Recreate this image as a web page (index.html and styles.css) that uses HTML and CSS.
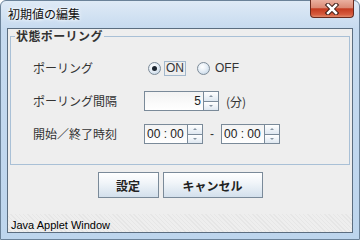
FILE: index.html
```html
<!DOCTYPE html>
<html>
<head>
    <title>初期値の編集</title>
    <link rel="stylesheet" href="styles.css">
</head>
<body>
    <div class="window">
        <div class="titlebar">
            <span class="title">初期値の編集</span>
            <button class="close" type="button">
                <svg width="16" height="12" viewBox="0 0 16 12">
                    <path d="M4 2 L12 10 M12 2 L4 10" stroke="#3a1a14" stroke-width="4.5" stroke-linecap="square"/>
                    <path d="M4 2 L12 10 M12 2 L4 10" stroke="#ffffff" stroke-width="2.5" stroke-linecap="square"/>
                </svg>
            </button>
        </div>

        <div class="client">
            <fieldset class="group">
                <legend>状態ポーリング</legend>
                <div class="form-grid">
                    <div class="label">ポーリング</div>
                    <div class="radios">
                        <label class="option">
                            <span class="radio checked"></span>
                            <span class="option-text focused">ON</span>
                        </label>
                        <label class="option">
                            <span class="radio"></span>
                            <span class="option-text">OFF</span>
                        </label>
                    </div>

                    <div class="label">ポーリング間隔</div>
                    <div class="control-row">
                        <div class="spin spin-wide">
                            <div class="spin-field align-right">5</div>
                            <div class="spin-btns">
                                <span class="spin-btn up"><i></i></span>
                                <span class="spin-btn down"><i></i></span>
                            </div>
                        </div>
                        <span class="unit">(分)</span>
                    </div>

                    <div class="label">開始／終了時刻</div>
                    <div class="control-row">
                        <div class="spin spin-time">
                            <div class="spin-field">00 : 00</div>
                            <div class="spin-btns">
                                <span class="spin-btn up"><i></i></span>
                                <span class="spin-btn down"><i></i></span>
                            </div>
                        </div>
                        <span class="dash">-</span>
                        <div class="spin spin-time">
                            <div class="spin-field">00 : 00</div>
                            <div class="spin-btns">
                                <span class="spin-btn up"><i></i></span>
                                <span class="spin-btn down"><i></i></span>
                            </div>
                        </div>
                    </div>
                </div>
            </fieldset>

            <div class="buttons">
                <button type="button" class="btn btn-ok">設定</button>
                <button type="button" class="btn btn-cancel">キャンセル</button>
            </div>

            <div class="status">Java Applet Window</div>
        </div>
    </div>
</body>
</html>
```

FILE: styles.css
```css
        body {
            margin: 0;
            font-family: "Liberation Sans", "Noto Sans CJK JP", sans-serif;
            font-size: 12px;
            color: #222;
        }

        .window {
            width: 360px;
            height: 240px;
            box-sizing: border-box;
            display: flex;
            flex-direction: column;
            padding: 0 6px 6px 6px;
            border: 1px solid #6b8299;
            border-radius: 6px 6px 0 0;
            background: linear-gradient(180deg, #dfeaf6 0, #c6daef 28px, #bdd5ed 100%);
        }

        .titlebar {
            height: 27px;
            display: flex;
            justify-content: space-between;
            align-items: flex-start;
            flex-shrink: 0;
        }

        .title {
            padding: 5px 0 0 1px;
            line-height: 16px;
            font-family: "Noto Sans CJK JP", sans-serif;
            color: #111;
            text-shadow: 0 0 5px #ffffff, 0 0 3px #ffffff;
        }

        .close {
            width: 44px;
            height: 18px;
            margin: -1px -1px 0 0;
            padding: 0;
            display: flex;
            align-items: center;
            justify-content: center;
            border: 1px solid #6a2a1e;
            border-top: none;
            border-radius: 0 0 4px 4px;
            background: linear-gradient(180deg, #eab0a0 0%, #db8a75 45%, #c43b20 52%, #d65b3e 85%, #e08a6c 100%);
        }

        .client {
            flex: 1;
            display: flex;
            flex-direction: column;
            border: 1px solid #5b6d80;
            background-color: #eeeeee;
        }

        .group {
            margin: 0 2px;
            padding: 15px 0 20px 22px;
            border: 1px solid #a9c0d6;
        }

        .group legend {
            margin-left: -18px;
            padding: 0 1px;
            line-height: 14px;
            font-family: "Noto Sans CJK JP", sans-serif;
            font-weight: bold;
            letter-spacing: 0.4px;
            color: #333;
        }

        .form-grid {
            display: grid;
            grid-template-columns: 111px auto;
            grid-auto-rows: 20px;
            row-gap: 13px;
            align-items: center;
        }

        .label {
            font-family: "Noto Sans CJK JP", sans-serif;
            line-height: 16px;
            color: #333;
        }

        .radios {
            display: flex;
            align-items: center;
            gap: 11px;
            padding-left: 4px;
        }

        .option {
            display: flex;
            align-items: center;
            gap: 3px;
        }

        .radio {
            width: 11px;
            height: 11px;
            border: 1px solid #7d8b98;
            border-radius: 50%;
            background: radial-gradient(circle at 40% 35%, #ffffff 0, #e6eef6 45%, #b9cde0 100%);
            display: flex;
            align-items: center;
            justify-content: center;
        }

        .radio.checked::after {
            content: "";
            width: 5px;
            height: 5px;
            border-radius: 50%;
            background-color: #1c2530;
        }

        .option-text {
            padding: 0 1px;
            border: 1px solid transparent;
            line-height: 13px;
            color: #333;
        }

        .option-text.focused {
            border-color: #a3b8cc;
        }

        .control-row {
            display: flex;
            align-items: center;
        }

        .spin {
            height: 20px;
            box-sizing: border-box;
            display: flex;
            border: 1px solid #7a8a99;
            background-color: #ffffff;
        }

        .spin-wide {
            width: 75px;
        }

        .spin-time {
            width: 59px;
        }

        .spin-field {
            flex: 1;
            padding: 0 2px;
            line-height: 18px;
            font-size: 12px;
            color: #222;
            background: linear-gradient(180deg, #f3f3f3, #ffffff);
            white-space: nowrap;
        }

        .align-right {
            text-align: right;
        }

        .spin-btns {
            width: 14px;
            display: flex;
            flex-direction: column;
            border-left: 1px solid #7a8a99;
        }

        .spin-btn {
            flex: 1;
            display: flex;
            align-items: center;
            justify-content: center;
            background: linear-gradient(180deg, #ffffff, #dfe8f1);
        }

        .spin-btn.up {
            border-bottom: 1px solid #7a8a99;
        }

        .spin-btn i {
            width: 0;
            height: 0;
            border-left: 2px solid transparent;
            border-right: 2px solid transparent;
        }

        .spin-btn.up i {
            border-bottom: 2px solid #8795a3;
        }

        .spin-btn.down i {
            border-top: 2px solid #8795a3;
        }

        .unit {
            margin-left: 7px;
            font-family: "Noto Sans CJK JP", sans-serif;
            color: #333;
        }

        .dash {
            width: 18px;
            text-align: center;
            color: #333;
        }

        .buttons {
            display: flex;
            justify-content: center;
            gap: 4px;
            margin-top: 7px;
        }

        .btn {
            height: 26px;
            padding: 0;
            border: 1px solid #7a8a99;
            background: linear-gradient(180deg, #ffffff 0%, #f1f5f9 40%, #d3e0ec 100%);
            font-family: "Noto Sans CJK JP", sans-serif;
            font-size: 12px;
            font-weight: bold;
            color: #222;
        }

        .btn-ok {
            width: 61px;
        }

        .btn-cancel {
            width: 100px;
        }

        .status {
            margin-top: auto;
            height: 18px;
            box-sizing: border-box;
            padding: 4px 3px 0 3px;
            line-height: 14px;
            font-size: 11px;
            color: #000;
            background: repeating-linear-gradient(45deg, #eeeeee 0, #eeeeee 2px, #e6e6e6 2px, #e6e6e6 3px);
        }
```
